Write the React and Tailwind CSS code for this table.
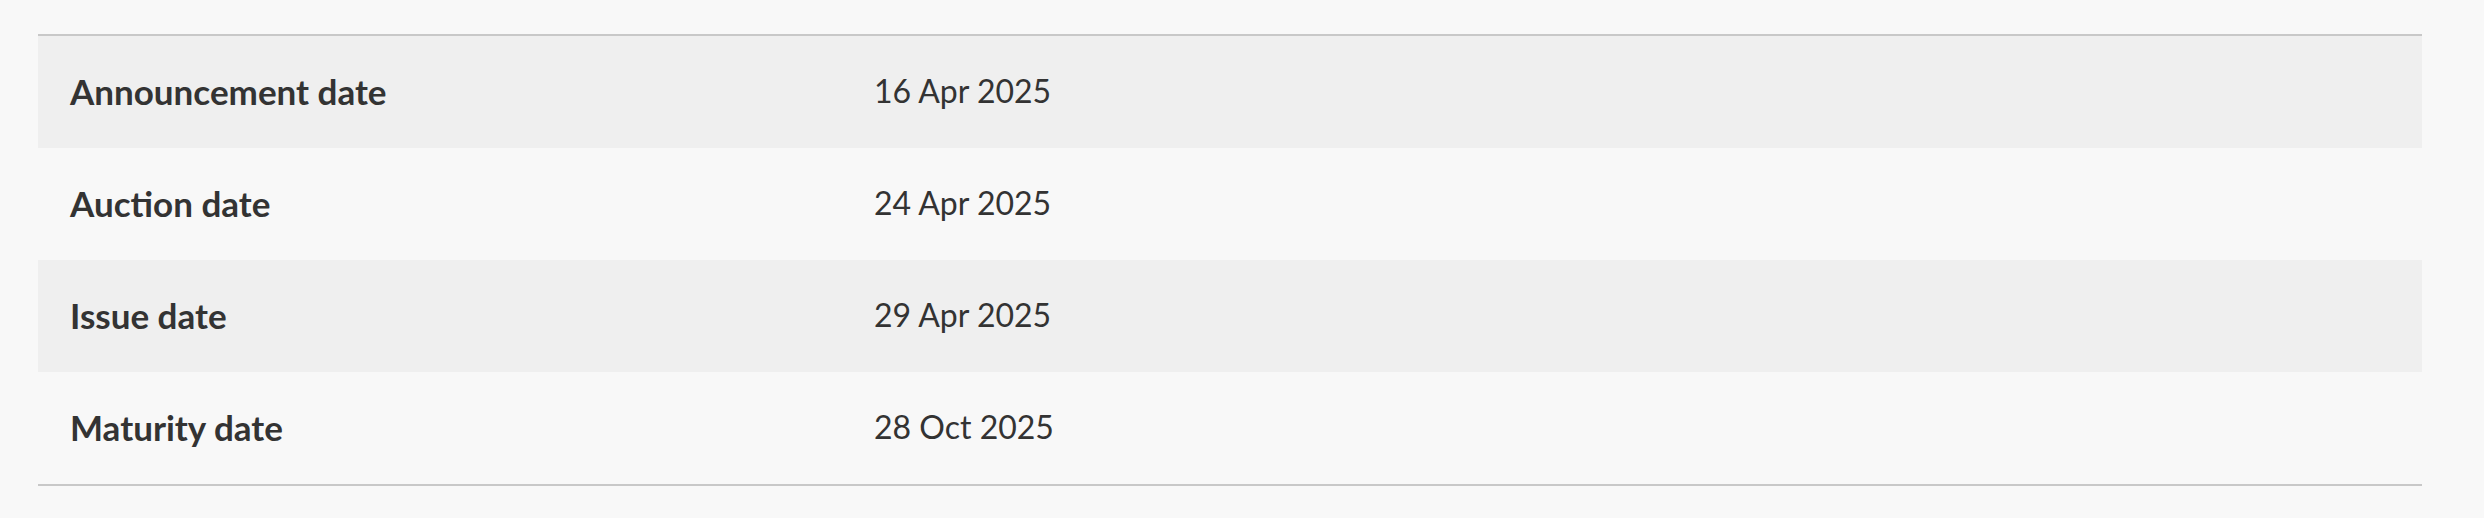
const rows = [
  { label: 'Announcement date', value: '16 Apr 2025' },
  { label: 'Auction date', value: '24 Apr 2025' },
  { label: 'Issue date', value: '29 Apr 2025' },
  { label: 'Maturity date', value: '28 Oct 2025' },
]

export default function App() {
  return (
    <div className="min-h-[518px] bg-[#f8f8f8] pl-[38px] pr-[62px] pt-[34px] font-['Lato',sans-serif] text-[#333]">
      <dl className="border-y-2 border-[#c8c8c8]">
        {rows.map((row, i) => (
          <div
            key={row.label}
            className={`flex h-[112px] items-center pb-[2px] ${i % 2 === 0 ? 'bg-[#efefef]' : 'bg-[#f8f8f8]'}`}
          >
            <dt className="w-[836px] shrink-0 pl-8 text-[35px] font-bold">{row.label}</dt>
            <dd className="text-[32px]">{row.value}</dd>
          </div>
        ))}
      </dl>
    </div>
  )
}
